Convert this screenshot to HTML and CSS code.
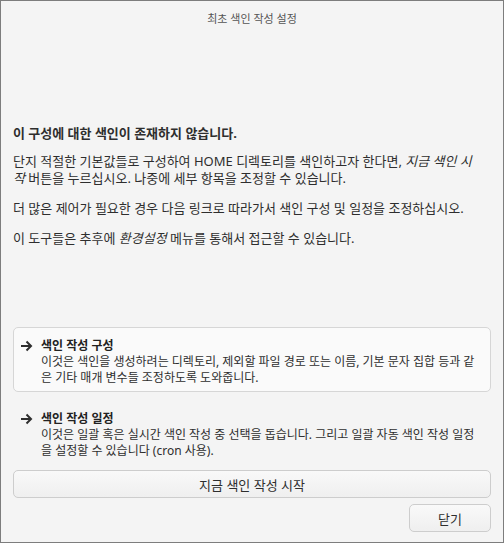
FILE: index.html
```html
<!DOCTYPE html>
<html lang="ko">
<head>
    <meta charset="UTF-8">
    <title>최초 색인 작성 설정</title>
    <link rel="stylesheet" href="styles.css">
</head>
<body>
    <div class="window">
        <div class="titlebar">최초 색인 작성 설정</div>

        <div class="intro">
            <p class="heading">이 구성에 대한 색인이 존재하지 않습니다.</p>
            <p>단지 적절한 기본값들로 구성하여 HOME 디렉토리를 색인하고자 한다면, <i>지금 색인 시작</i> 버튼을 누르십시오. 나중에 세부 항목을 조정할 수 있습니다.</p>
            <p>더 많은 제어가 필요한 경우 다음 링크로 따라가서 색인 구성 및 일정을 조정하십시오.</p>
            <p>이 도구들은 추후에 <i>환경설정</i> 메뉴를 통해서 접근할 수 있습니다.</p>
        </div>

        <div class="links">
            <div class="link-item active">
                <svg class="arrow" width="13" height="12" viewBox="0 0 13 12">
                    <path d="M1 6H11M6.5 1.5L11 6L6.5 10.5" fill="none" stroke="#2e2e2e" stroke-width="2"/>
                </svg>
                <div class="link-text">
                    <div class="link-title">색인 작성 구성</div>
                    <div class="link-desc">이것은 색인을 생성하려는 디렉토리, 제외할 파일 경로 또는 이름, 기본 문자 집합 등과 같은 기타 매개 변수들 조정하도록 도와줍니다.</div>
                </div>
            </div>
            <div class="link-item">
                <svg class="arrow" width="13" height="12" viewBox="0 0 13 12">
                    <path d="M1 6H11M6.5 1.5L11 6L6.5 10.5" fill="none" stroke="#2e2e2e" stroke-width="2"/>
                </svg>
                <div class="link-text">
                    <div class="link-title">색인 작성 일정</div>
                    <div class="link-desc">이것은 일괄 혹은 실시간 색인 작성 중 선택을 돕습니다. 그리고 일괄 자동 색인 작성 일정을 설정할 수 있습니다 (cron 사용).</div>
                </div>
            </div>
        </div>

        <button class="btn wide">지금 색인 작성 시작</button>
        <div class="footer">
            <button class="btn">닫기</button>
        </div>
    </div>
</body>
</html>
```

FILE: styles.css
```css
* {
    margin: 0;
    padding: 0;
    box-sizing: border-box;
}

body {
    font-family: "Noto Sans", "Noto Sans CJK KR", sans-serif;
    font-size: 13px;
    color: #2e2e2e;
    background: #f4f4f4;
}

.window {
    width: 504px;
    height: 543px;
    border: 1px solid #7d7d7d;
    background: #f4f4f4;
    display: flex;
    flex-direction: column;
    padding: 0 12px;
}

.titlebar {
    text-align: center;
    font-size: 11px;
    color: #555;
    padding-top: 9px;
    line-height: 17px;
}

.intro {
    margin-top: 98px;
    padding-right: 10px;
}

.intro p {
    line-height: 17px;
    margin-bottom: 13px;
}

.intro .heading {
    font-weight: bold;
    margin-bottom: 11px;
}

.links {
    margin-top: 67px;
    display: flex;
    flex-direction: column;
    gap: 8px;
}

.link-item {
    display: flex;
    align-items: flex-start;
    padding: 10px 8px 5px 6px;
    border: 1px solid transparent;
    border-radius: 5px;
}

.link-item.active {
    background: #fafafa;
    border-color: #d6d6d6;
}

.arrow {
    flex: none;
    margin-top: 2px;
    margin-right: 8px;
}

.link-title {
    font-weight: bold;
    font-size: 12px;
    line-height: 16px;
    color: #222;
}

.link-desc {
    font-size: 12px;
    line-height: 16px;
}

.btn {
    font-family: inherit;
    font-size: 13px;
    color: #2e2e2e;
    background: linear-gradient(#f9f9f9, #efefef);
    border: 1px solid #cdcdcd;
    border-radius: 5px;
    height: 28px;
}

.btn.wide {
    width: 100%;
    margin-top: 5px;
}

.footer {
    display: flex;
    justify-content: flex-end;
    margin-top: 6px;
}

.footer .btn {
    width: 82px;
}
```
